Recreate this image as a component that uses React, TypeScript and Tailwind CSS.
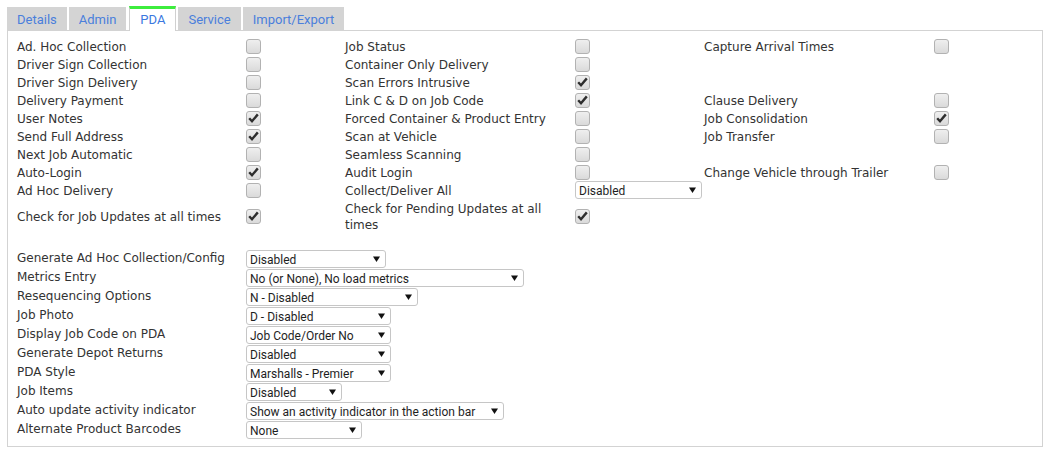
import React from 'react';

type Cell = { label: string; checked?: boolean; select?: string; selectWidth?: number } | null;

const topRows: Cell[][] = [
  [{ label: 'Ad. Hoc Collection' }, { label: 'Job Status' }, { label: 'Capture Arrival Times' }],
  [{ label: 'Driver Sign Collection' }, { label: 'Container Only Delivery' }, null],
  [{ label: 'Driver Sign Delivery' }, { label: 'Scan Errors Intrusive', checked: true }, null],
  [{ label: 'Delivery Payment' }, { label: 'Link C & D on Job Code', checked: true }, { label: 'Clause Delivery' }],
  [{ label: 'User Notes', checked: true }, { label: 'Forced Container & Product Entry' }, { label: 'Job Consolidation', checked: true }],
  [{ label: 'Send Full Address', checked: true }, { label: 'Scan at Vehicle' }, { label: 'Job Transfer' }],
  [{ label: 'Next Job Automatic' }, { label: 'Seamless Scanning' }, null],
  [{ label: 'Auto-Login', checked: true }, { label: 'Audit Login' }, { label: 'Change Vehicle through Trailer' }],
  [{ label: 'Ad Hoc Delivery' }, { label: 'Collect/Deliver All', select: 'Disabled', selectWidth: 127 }, null],
];

const selectRows = [
  { label: 'Generate Ad Hoc Collection/Config', value: 'Disabled', w: 140 },
  { label: 'Metrics Entry', value: 'No (or None), No load metrics', w: 278 },
  { label: 'Resequencing Options', value: 'N - Disabled', w: 172 },
  { label: 'Job Photo', value: 'D - Disabled', w: 145 },
  { label: 'Display Job Code on PDA', value: 'Job Code/Order No', w: 145 },
  { label: 'Generate Depot Returns', value: 'Disabled', w: 145 },
  { label: 'PDA Style', value: 'Marshalls - Premier', w: 145 },
  { label: 'Job Items', value: 'Disabled', w: 96 },
  { label: 'Auto update activity indicator', value: 'Show an activity indicator in the action bar', w: 258 },
  { label: 'Alternate Product Barcodes', value: 'None', w: 116 },
];

function Checkbox({ checked }: { checked?: boolean }) {
  return (
    <div className="flex h-[15px] w-[15px] items-center justify-center rounded-[3px] border border-[#b2b2b2] bg-gradient-to-b from-[#efefef] to-[#dadada]">
      {checked && (
        <svg width="11" height="10" viewBox="0 0 11 10">
          <path d="M1.2 5.2 L4 8.2 L9.8 1.4" fill="none" stroke="#2e2e2e" strokeWidth="2.4" strokeLinejoin="miter" />
        </svg>
      )}
    </div>
  );
}

function Select({ value, width }: { value: string; width: number }) {
  return (
    <div
      className="flex h-[18px] items-center justify-between rounded-[3px] border border-[#c6c6c6] bg-white pl-[3px] pr-[5px] font-['Roboto',sans-serif] text-[12px] leading-none text-[#1e1e1e]"
      style={{ width }}
    >
      <span className="whitespace-nowrap pt-[2px]">{value}</span>
      <svg width="7" height="6" viewBox="0 0 7 6" className="shrink-0">
        <path d="M0 0.5 H7 L3.5 6 Z" fill="#111" />
      </svg>
    </div>
  );
}

const tabs = ['Details', 'Admin', 'PDA', 'Service', 'Import/Export'];

export default function App() {
  return (
    <div className="h-[454px] w-[1051px] bg-white pl-[7px] pt-[6px] font-['DejaVu_Sans',Verdana,sans-serif] text-[12px] text-[#333]">
      {/* Tabs */}
      <div className="flex h-[24px] items-end gap-[2px]">
        {tabs.map(t =>
          t === 'PDA' ? (
            <div
              key={t}
              className="relative z-10 -mb-px ml-[1px] flex h-[25px] items-center border-x border-t-[3px] border-x-[#d0d0d0] border-t-[#3ded3d] bg-white px-[10px] pb-px font-['Roboto',sans-serif] text-[13px] text-[#3b78e0]"
            >
              {t}
            </div>
          ) : (
            <div
              key={t}
              className="flex h-[23px] items-center bg-[#d4d4d4] px-[10px] pt-[2px] font-['Roboto',sans-serif] text-[13px] text-[#4a7fdc]"
            >
              {t}
            </div>
          )
        )}
      </div>

      {/* Panel */}
      <div className="w-[1036px] border border-[#d3d3d3] px-[9px] pb-[7px] pt-[6px]">
        <div className="grid grid-cols-[229px_99px_230px_129px_230px_1fr]">
          {topRows.map((row, ri) =>
            row.map((cell, ci) => (
              <React.Fragment key={`${ri}-${ci}`}>
                <div className="flex h-[18px] items-center pt-[2px] leading-[16px] whitespace-nowrap">{cell?.label}</div>
                <div className="flex h-[18px] items-center">
                  {cell && (cell.select ? <Select value={cell.select} width={cell.selectWidth!} /> : <Checkbox checked={cell.checked} />)}
                </div>
              </React.Fragment>
            ))
          )}
          <div className="flex h-[34px] items-center pt-[2px] leading-[16px]">Check for Job Updates at all times</div>
          <div className="flex h-[34px] items-center">
            <Checkbox checked />
          </div>
          <div className="flex h-[34px] items-center pt-[2px] leading-[16px]">
            Check for Pending Updates at all
            <br />
            times
          </div>
          <div className="flex h-[34px] items-center">
            <Checkbox checked />
          </div>
          <div />
          <div />
        </div>

        <div className="mt-[16px] grid grid-cols-[229px_1fr]">
          {selectRows.map(r => (
            <React.Fragment key={r.label}>
              <div className="h-[19px] pt-px leading-[16px] whitespace-nowrap">{r.label}</div>
              <div className="h-[19px] pt-px">
                <Select value={r.value} width={r.w} />
              </div>
            </React.Fragment>
          ))}
        </div>
      </div>
    </div>
  );
}
